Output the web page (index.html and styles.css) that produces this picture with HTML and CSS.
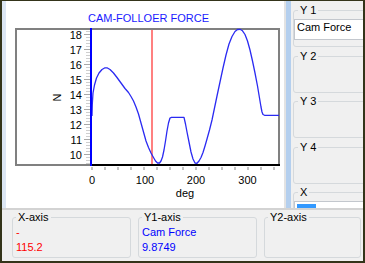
FILE: index.html
```html
<!DOCTYPE html>
<html lang="en">
<head>
    <meta charset="UTF-8">
    <title>Cam-follower force</title>
    <link rel="stylesheet" href="styles.css">
</head>
<body>
    <div class="window">
        <div class="main">
            <div class="edge"></div>

            <!-- Plot -->
            <div class="chart">
                <svg width="278" height="207" viewBox="6 1 278 207">
                    <text class="title" x="148.5" y="22" text-anchor="middle">CAM-FOLLOER FORCE</text>

                    <rect x="16" y="29" width="263" height="136" fill="none" stroke="#808080" stroke-width="2"/>

                    <!-- y ticks -->
                    <line x1="88" y1="31" x2="88" y2="164" stroke="#cfcfcf" stroke-width="4" stroke-dasharray="1 2"/>
                    <line x1="87" y1="34" x2="87" y2="164" stroke="#a8a8a8" stroke-width="6" stroke-dasharray="1 14"/>
                    <g text-anchor="end">
                        <text x="82" y="38.5">18</text>
                        <text x="82" y="53.5">17</text>
                        <text x="82" y="68.5">16</text>
                        <text x="82" y="83.5">15</text>
                        <text x="82" y="98.5">14</text>
                        <text x="82" y="113.5">13</text>
                        <text x="82" y="128.5">12</text>
                        <text x="82" y="143.5">11</text>
                        <text x="82" y="158.5">10</text>
                    </g>
                    <text transform="translate(61 97.5) rotate(-90)" text-anchor="middle">N</text>

                    <!-- x ticks -->
                    <line x1="91" y1="168.5" x2="280" y2="168.5" stroke="#c4c4c4" stroke-width="3" stroke-dasharray="2 11"/>
                    <g text-anchor="middle">
                        <text x="92" y="184">0</text>
                        <text x="145" y="184">100</text>
                        <text x="196" y="184">200</text>
                        <text x="247.5" y="184">300</text>
                        <text x="185" y="197">deg</text>
                    </g>

                    <!-- cursor -->
                    <line x1="152" y1="30" x2="152" y2="164" stroke="#ff8080" stroke-width="2"/>

                    <!-- force curve -->
                    <polyline fill="none" stroke="#2a2af2" stroke-width="1.3" stroke-linejoin="round"
                        points="92,116 92.3,104 93,93 94.5,85 96.5,78 99,73 102,69.5 105,67.8 107,67.8 110,69.5
                        113.5,73 117,77.5 121,83 125,88.5 128.5,92.5 131,96.5 133.5,101 136,107 138.5,114 141,123
                        143.5,132 146,141 148.5,147.5 151,153 153.5,157.5 155.5,161 157.5,163 159.5,163 161,161
                        162.5,157 164,150 165.5,141 167,131 168.5,123 170,118 171.5,117.3 184,117.3 185.5,124
                        187,132 189,142 191,152 193,159 195,163 197,163.3 199,161 201,157.5 203,152.5 205,146
                        207,139 209.5,130 212,120 214.5,108 217,96 220,82 223,68 226,55 229,44 232,36.5 235,31.5
                        237.5,29.5 240,29.3 242.5,30.8 245,34.5 247.5,41 250,50 252.5,61 255,73 257.5,86 259.5,98
                        261,107 262,112 263,114.5 264.5,115.3 279,115.3"/>

                    <line x1="91" y1="28" x2="91" y2="166" stroke="#0000ff" stroke-width="2"/>
                    <line x1="92" y1="165" x2="280" y2="165" stroke="#000" stroke-width="2"/>
                </svg>
            </div>

            <div class="splitter"></div>

            <!-- Series pickers -->
            <div class="side">
                <fieldset class="group">
                    <legend>Y 1</legend>
                    <div class="field">Cam Force</div>
                </fieldset>
                <fieldset class="group"><legend>Y 2</legend></fieldset>
                <fieldset class="group"><legend>Y 3</legend></fieldset>
                <fieldset class="group"><legend>Y 4</legend></fieldset>
                <fieldset class="group">
                    <legend>X</legend>
                    <div class="field"><span class="selected"></span></div>
                </fieldset>
            </div>
        </div>

        <!-- Cursor readout -->
        <div class="readout">
            <fieldset class="box">
                <legend>X-axis</legend>
                <div class="values red">
                    <div>-</div>
                    <div>115.2</div>
                </div>
            </fieldset>
            <fieldset class="box">
                <legend>Y1-axis</legend>
                <div class="values blue">
                    <div>Cam Force</div>
                    <div>9.8749</div>
                </div>
            </fieldset>
            <fieldset class="box wide">
                <legend>Y2-axis</legend>
            </fieldset>
        </div>
    </div>
</body>
</html>
```

FILE: styles.css
```css
* {
    margin: 0;
    padding: 0;
    box-sizing: border-box;
}

body {
    font-family: 'Liberation Sans', Arial, sans-serif;
    font-size: 11px;
    color: #000;
}

.window {
    width: 365px;
    height: 263px;
    border: 2px solid #34341a;
    border-top-width: 1px;
    background-color: #f0f0f0;
    display: flex;
    flex-direction: column;
}

.main {
    height: 207px;
    display: flex;
}

.edge {
    width: 4px;
    background-color: #dce6f3;
}

.chart {
    width: 280px;
    background-color: #fff;
    border-right: 2px solid #e3e3e3;
}

.chart svg {
    display: block;
    font-family: 'Liberation Sans', Arial, sans-serif;
    font-size: 11px;
}

.chart .title {
    fill: #1a1aff;
}

.splitter {
    width: 5px;
    background-color: #b4cfee;
}

.side {
    flex: 1;
    overflow: hidden;
    padding: 4px 0 0 2px;
    display: flex;
    flex-direction: column;
    gap: 3.5px;
}

fieldset {
    border: 1px solid #d5d9dc;
    border-radius: 3px;
    min-width: 0;
}

legend {
    font-size: 11px;
    line-height: 11px;
    padding: 0 2px;
}

.group {
    flex: none;
    width: 90px;
    height: 42px;
    padding: 0;
}

.group legend {
    margin-left: 4px;
}

.field {
    margin-top: 3px;
    height: 21px;
    background-color: #fff;
    border: 1px solid #c3c7cd;
    padding-left: 2px;
    line-height: 15px;
    white-space: nowrap;
}

.selected {
    display: block;
    width: 19px;
    height: 12px;
    margin-top: 2px;
    background-color: #3399ff;
    border-top: 2px solid #3399ff;
    box-shadow: inset 2px 1px 0 -0.5px #3399ff;
}

.readout {
    flex: 1;
    border-top: 2px solid #d3d3d3;
    padding: 2px 2px 0 10px;
    display: flex;
    gap: 7px;
}

.box {
    width: 119px;
    height: 46px;
    padding: 0 0 0 3px;
}

.box.wide {
    flex: 1;
}

.values {
    padding-top: 2px;
    line-height: 15px;
}

.red {
    color: #ff0000;
}

.blue {
    color: #0000ff;
}
```
